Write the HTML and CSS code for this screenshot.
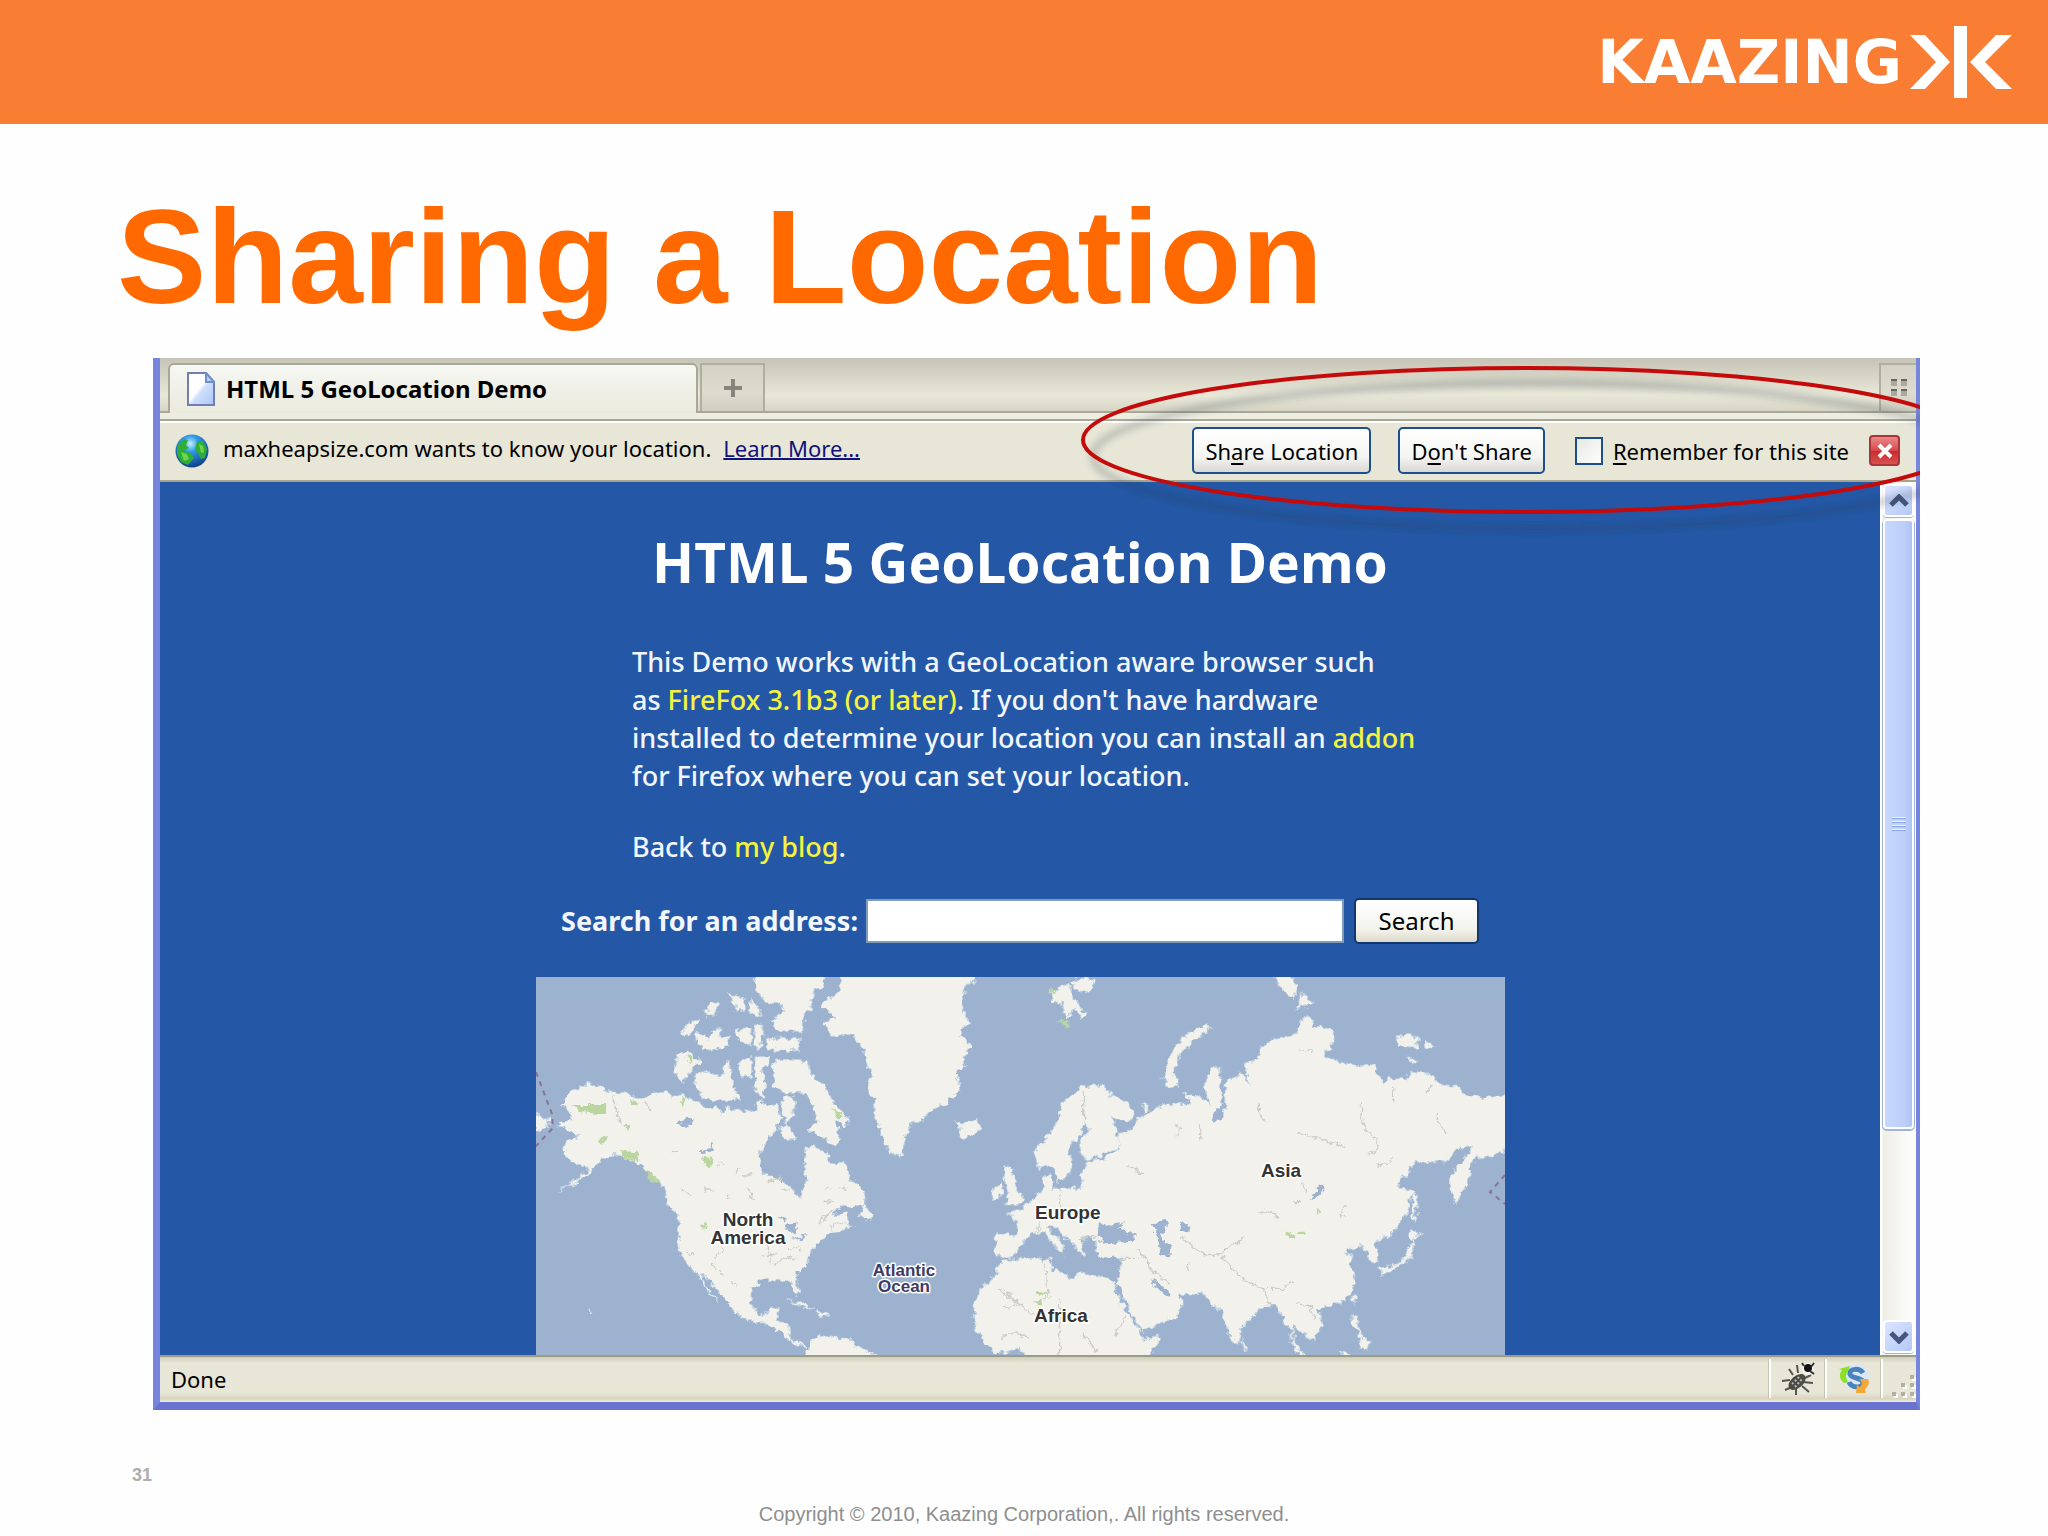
FILE: index.html
```html
<!DOCTYPE html>
<html lang="en">
<head>
<meta charset="utf-8">
<title>Sharing a Location</title>
<link rel="stylesheet" href="styles.css">
</head>
<body>
<header class="banner">
  <div class="brand">
    <span class="brand-name">KAAZING</span>
    <svg class="brand-mark" viewBox="0 0 102 72" aria-hidden="true">
      <path d="M44 0h13v72H44zM0 9h15l25 27-25 27H0l26-27zM102 9H86L60 36l26 27h16L75 36z"/>
    </svg>
  </div>
</header>

<main class="slide">
  <h1 class="slide-title">Sharing a Location</h1>

  <section class="window">
    <div class="tabstrip">
      <div class="tab">
        <svg class="page-icon" viewBox="0 0 28 34" aria-hidden="true">
          <defs><linearGradient id="pg" x1="0" y1="0" x2="1" y2="1"><stop offset=".45" stop-color="#fff"/><stop offset=".55" stop-color="#cfdffb"/><stop offset="1" stop-color="#a9c6fa"/></linearGradient></defs>
          <path d="M1 1h18l8 9v23H1z" fill="url(#pg)" stroke="#6f7fb4" stroke-width="2"/>
          <path d="M19 1v9h8z" fill="#b8d2fb" stroke="#6f8fc8" stroke-width="2"/>
        </svg>
        <span>HTML 5 GeoLocation Demo</span>
      </div>
      <button class="new-tab" type="button" aria-label="New tab">
        <svg viewBox="0 0 18 18" aria-hidden="true"><path d="M9 0v18M0 9h18" stroke="#85857b" stroke-width="4"/></svg>
      </button>
      <button class="tab-list" type="button" aria-label="List tabs">
        <svg viewBox="0 0 18 20" aria-hidden="true"><path d="M1 2h6v6H1zM11 2h6v6h-6zM1 12h6v6H1zM11 12h6v6h-6z" fill="#aaa99f"/><path d="M1 2h6M11 2h6M1 12h6M11 12h6" stroke="#66665f" stroke-width="2"/></svg>
      </button>
    </div>

    <div class="infobar">
      <svg class="globe" viewBox="0 0 34 34" aria-hidden="true">
        <defs><radialGradient id="gl" cx=".45" cy=".28" r=".7"><stop offset="0" stop-color="#c8f0ff"/><stop offset=".35" stop-color="#2f9ae6"/><stop offset="1" stop-color="#12418f"/></radialGradient></defs>
        <circle cx="17" cy="17" r="16.5" fill="url(#gl)"/>
        <path d="M2 12L9 5l4 1-2 5 3 3-6 3 8 2 3 5-6 7-7-3-4-8zM22 7l6 0 4 8-2 9-4 1-3-6-3-3z" fill="#2fae35"/>
        <path d="M6 18l6 2 2 5-5 2zM24 10l4 2 1 6-3 1z" fill="#6fd44f"/>
      </svg>
      <p class="ask">maxheapsize.com wants to know your location.</p>
      <a class="learn" href="#">Learn More...</a>
      <div class="choices">
        <button class="xp-button" type="button">Sh<u>a</u>re Location</button>
        <button class="xp-button" type="button">D<u>o</u>n't Share</button>
        <label class="remember" for="remember"><input id="remember" type="checkbox"><span><u>R</u>emember for this site</span></label>
        <button class="close" type="button" aria-label="Close">
          <svg viewBox="0 0 16 16" aria-hidden="true"><path d="M2 2l12 12M14 2L2 14" stroke="#fff" stroke-width="4"/></svg>
        </button>
      </div>
    </div>

    <div class="viewport">
      <div class="page">
        <h2 class="page-title">HTML 5 GeoLocation Demo</h2>
        <div class="intro">
          <p>This Demo works with a GeoLocation aware browser such<br>as <a href="#">FireFox 3.1b3 (or later)</a>. If you don't have hardware<br>installed to determine your location you can install an <a href="#">addon</a><br>for Firefox where you can set your location.</p>
          <p>Back to <a href="#">my blog</a>.</p>
        </div>
        <form class="search">
          <label for="address">Search for an address:</label>
          <input id="address" type="text">
          <button type="button">Search</button>
        </form>
        <svg class="map" viewBox="0 0 969 378" role="img" aria-label="World map">
          <defs>
            <filter id="coast" x="-5%" y="-5%" width="110%" height="110%">
              <feTurbulence type="fractalNoise" baseFrequency=".16" numOctaves="3" seed="4"/>
              <feDisplacementMap in="SourceGraphic" scale="9" xChannelSelector="R" yChannelSelector="G"/>
            </filter>
          </defs>
          <g filter="url(#coast)">
            <g class="land" transform="translate(-15 -17) scale(.3333)">
              <path d="M960 40H1362L1358 70 1335 75 1330 110 1325 150 1345 190 1318 210 1335 245 1350 258 1325 290 1335 310 1300 345 1320 370 1310 400 1275 430 1225 455 1200 485 1170 490 1155 530 1140 590 1115 585 1090 550 1075 510 1065 480 1058 440 1070 415 1045 405 1045 370 1055 350 1040 320 1030 280 1015 250 995 228 930 225 905 185 945 175 900 140 915 120 955 95Z"/>
              <path d="M1300 480L1315 500 1310 515 1325 535 1355 530 1380 510 1382 490 1365 480 1340 488 1320 485Z"/>
              <path d="M120 435L150 395 175 385 200 370 235 378 265 392 310 398 350 412 380 415 400 400 440 395 450 410 480 405 520 420 545 430 555 450 590 440 600 465 615 440 650 450 700 450 715 420 740 440 765 430 780 480 760 520 735 545 715 580 715 610 725 635 755 650 800 675 825 700 838 722 845 690 855 660 850 620 852 560 880 560 920 580 930 610 950 615 965 600 990 660 1030 690 1032 735 985 740 960 738 930 765 975 760 985 790 1000 795 950 815 915 825 905 840 885 850 865 880 865 905 830 940 825 955 835 1000 825 1005 810 965 790 960 720 962 690 985 690 1030 710 1060 735 1065 750 1045 775 1042 765 1085 800 1090 805 1110 810 1140 850 1150 855 1160 830 1160 800 1140 780 1115 730 1090 690 1085 640 1060 620 1025 590 990 560 955 540 945 560 985 590 1025 570 1010 545 970 530 940 500 915 475 875 470 820 475 765 440 735 435 700 420 670 395 660 370 620 330 600 290 585 260 590 235 605 210 635 170 665 110 695 180 650 205 625 165 610 135 590 130 550 175 525 140 510 110 495 150 480 145 450Z"/>
              <path d="M1012 770L1030 735 1055 765 1050 782ZM925 802L960 790 1000 797 945 818ZM852 1195L870 1140 900 1125 950 1135 985 1135 1000 1155 1085 1195ZM800 1022L840 1026 878 1052 840 1040ZM890 1052L930 1065 895 1074ZM40 460L85 480 80 500 40 512Z"/>
              <path d="M755 310L785 298 860 305 870 340 910 375 940 430 985 475 975 500 945 480 960 545 945 560 900 530 855 510 890 490 870 430 850 400 800 400 760 380ZM785 410L820 410 822 450 800 490 780 460ZM775 500L800 495 825 535 790 540ZM515 350L540 330 600 350 620 300 632 330 635 380 665 415 600 422 545 415 520 370ZM470 280L510 280 540 305 500 345 485 370 460 345ZM650 310L690 290 692 350 660 350ZM705 290L745 290 742 320 720 330 735 370 725 412 702 400ZM735 235L835 235 835 272 740 270ZM525 215L560 235 590 205 600 230 625 230 620 260 560 272 530 250ZM640 210L690 205 690 255 650 240ZM700 195L725 195 720 265 700 260ZM480 220L500 185 540 180 520 210 500 228ZM550 160L575 122 590 130 580 172ZM622 98L665 115 675 150 650 155ZM685 120L710 135 720 170 690 160ZM700 40H918L905 80 875 90 870 150 850 160 845 215 770 210 750 185 790 150 780 135 735 130 705 85Z"/>
              <path d="M1412 690L1445 670 1447 700 1415 718ZM202 1045L218 1055 208 1064Z"/>
            </g>
            <g class="land" transform="translate(465 -17) scale(.3444 .3333)">
              <path d="M10 620L30 625 45 690 72 715 60 730 15 732 25 700 10 660Z"/>
              <path d="M95 570L130 540 160 490 180 430 235 380 295 375 320 405 370 430 388 465 370 485 325 470 335 520 350 530 345 560 300 585 250 600 230 580 230 540 260 510 245 490 225 530 200 560 200 600 205 620 185 655 165 665 155 620 110 625Z"/>
              <path d="M-17 820L50 828 45 780 20 760 60 750 95 715 125 690 120 650 145 645 150 685 235 685 230 640 250 605 310 595 345 560 345 520 375 510 390 485 440 450 500 430 550 430 530 400 585 410 605 440 590 380 610 320 635 325 640 380 640 430 650 460 650 370 700 340 725 380 705 310 750 300 750 265 800 235 860 220 880 170 905 175 910 200 960 210 965 240 940 290 990 305 1040 320 1080 310 1095 340 1110 375 1125 355 1180 360 1185 335 1250 345 1275 375 1330 375 1340 405 1420 415 1480 400V565L1420 590 1375 595 1365 610 1360 660 1320 730 1305 690 1310 640 1345 600 1370 560 1320 565 1295 605 1205 605 1150 675 1205 700 1190 710 1180 760 1140 815 1100 840 1085 855 1095 905 1070 910 1065 875 1040 855 1005 870 1000 880 1025 890 1015 910 1030 970 1000 1020 945 1040 920 1050 935 1100 905 1145 870 1110 850 1100 850 1140 885 1195 870 1195 845 1150 845 1110 820 1090 800 1035 770 1035 720 1080 700 1100 690 1155 665 1130 640 1050 615 1040 595 1005 510 1000 530 1030 510 1070 410 1115 390 1080 335 970 345 950 350 895 280 890 270 855 280 840 235 830 240 890 215 860 170 815 150 800 130 800 185 855 180 885 140 840 125 815 95 820 65 840 55 870 30 893 0 890-17 885Z"/>
              <path d="M145 895L60 895 0 905-19 945-63 990-79 1040-75 1100-48 1150-15 1183 50 1165 75 1195H430L455 1150 467 1130 410 1135 400 1110 375 1070 340 1010 325 960 230 935 210 955 150 930Z"/>
              <path d="M470 355L500 270 540 220 600 190 610 205 560 240 520 280 500 340 515 380 490 380ZM145 100L180 75 200 70 205 110 250 160 235 178 215 145 200 165 185 175 180 130 150 125ZM205 65L240 50 275 60 260 100 215 90ZM785 40H830L858 75 852 118 820 90ZM855 150L875 98 905 130ZM1150 232L1180 222 1215 235 1205 265 1155 262ZM1230 245L1262 262 1235 268ZM1182 290L1208 305 1195 314ZM1102 920L1160 910 1190 850 1182 810 1222 822 1195 840 1195 890 1150 925 1105 950ZM1195 700L1210 710 1202 792 1194 770ZM1018 1005H1032L1025 1032ZM1018 1065L1035 1070 1040 1110 1070 1150 1065 1170 1040 1165 1045 1130 1020 1100ZM695 1140L712 1155 708 1174ZM410 430L430 440 412 460ZM985 1175L1010 1180 990 1195Z"/>
            </g>
            <g class="water" transform="translate(465 -17) scale(.3444 .3333)">
              <path d="M285 785L310 800 360 785 340 802 390 822 385 845 300 850 280 830ZM440 790L480 780 485 795 465 820 492 860 488 892 460 885 455 840ZM525 790L548 790 545 818 525 812ZM438 958L500 1000 480 1012 450 985ZM893 716L935 672 936 690 910 716ZM615 460L650 430 645 470 620 485Z"/>
            </g>
            <g class="water" transform="translate(-15 -17) scale(.3333)">
              <path d="M465 488L500 470 525 480 495 505ZM535 580L580 550 570 575ZM765 765L800 775 790 785ZM790 795L830 790 825 815 800 820ZM810 840L865 820 845 836Z"/>
            </g>
            <g class="park" transform="translate(-15 -17) scale(.3333)">
              <path d="M155 435H255V465L175 455ZM300 570L355 580 350 600 305 590ZM370 625L418 660 410 672 380 650ZM545 590L570 590 575 625 555 620ZM935 445L965 462 950 475ZM495 290H518L508 316ZM235 530L260 535 245 555ZM540 790H556L550 815ZM330 412L350 430 335 440ZM478 415H488V440H478ZM310 495H330L318 512Z"/>
              <path d="M1580 85L1600 90 1605 105 1590 100ZM1612 180H1645L1640 205Z"/>
            </g>
            <g class="park" transform="translate(465 -17) scale(.3444 .3333)">
              <path d="M825 810L855 825 830 835ZM860 815H885V825H860ZM105 990L145 1010 100 1000ZM100 1020H118V1030H100ZM915 745L935 760 918 765Z"/>
            </g>
            <g class="trace" transform="translate(465 -17) scale(.3444 .3333)">
              <path d="M1050 430l-5 40 20 45 30 30-5 30-20 5M1270 460v30l25 35M860 520l60 15 80 25M750 430v30l20 30M515 490v40M580 490v50M1140 380v50M1250 375l-15 25M870 270h35M365 615l45 25M870 670l20 25M1090 615l30-5 20-20M520 830l70 55 50-5 70-50M640 890l60 65 60 30 60 0 25-20M760 990l20 45M860 1030l40 10 10 40M400 870l40 60 50 40M350 895h50M545 900v30M745 760l30-10 30 20M850 725h20M1000 740l-15 30 20 5M125 900l10 90-10 30M0 985l60 50 35 35M0 1135l50-20 30 20M170 1020v160M360 1070l-30 60M0 1040l60-5M235 1120l50 60M240 400v80M110 780v40M170 690v50l60 30M225 840l50-10"/>
            </g>
            <g class="trace" transform="translate(-15 -17) scale(.3333)">
              <path d="M275 410l20 80M375 430l20 20M450 575h20M480 690l30 20M550 690h30M620 700v15M645 640l10-15M665 645h30M680 680l15 40M740 670l40-20M780 690h20M915 690l10-10M955 690l10-10 10 15M890 790l50-45M910 720l30 5M500 870l20 20M570 910l40 40M580 890l30-20M630 960l20 20M720 890l50-10M760 910l60-20M740 850l10 60M800 860l40 10M590 610h20M1430 990l60 40"/>
            </g>
          </g>
          <path class="dateline" d="M0 95l16 42 1 14-17 18M969 198l-15 17 15 12"/>
          <g class="labels">
            <text x="212" y="249" text-anchor="middle">North</text>
            <text x="212" y="267" text-anchor="middle">America</text>
            <text x="499" y="242">Europe</text>
            <text x="725" y="200">Asia</text>
            <text x="498" y="345">Africa</text>
            <text class="sea" x="368" y="299" text-anchor="middle">Atlantic</text>
            <text class="sea" x="368" y="315" text-anchor="middle">Ocean</text>
          </g>
        </svg>
      </div>
      <div class="scrollbar">
        <button type="button" aria-label="Scroll up"><svg viewBox="0 0 20 14" aria-hidden="true"><path d="M2 11l8-8 8 8"/></svg></button>
        <div class="thumb"><span></span><span></span><span></span><span></span></div>
        <div class="track"></div>
        <button type="button" aria-label="Scroll down"><svg viewBox="0 0 20 14" aria-hidden="true"><path d="M2 3l8 8 8-8"/></svg></button>
      </div>
    </div>

    <div class="statusbar">
      <span class="status">Done</span>
      <span class="cell">
        <svg viewBox="0 0 34 34" aria-hidden="true">
          <path d="M12 13L8 7M17 11l-1-8M9 18l-8 1M11 25l-7 3M15 27l0 6M22 20l10 1M21 24l7 6M24 16l6-3" stroke="#55554f" stroke-width="2" fill="none"/>
          <ellipse cx="16" cy="20" rx="10" ry="6" transform="rotate(-40 16 20)" fill="#4a4a47"/>
          <path d="M11 22l8-8M14 25l8-9" stroke="#b9b9b0" stroke-width="2" stroke-dasharray="2 2"/>
          <circle cx="27" cy="7" r="6" fill="#f4f4f0"/><circle cx="27" cy="6" r="4" fill="#111"/><path d="M21 1l2 3M33 1l-3 4M33 12l-4-3" stroke="#333" stroke-width="2"/>
        </svg>
      </span>
      <span class="cell">
        <svg viewBox="0 0 34 34" aria-hidden="true">
          <circle cx="19" cy="15" r="13" fill="#d9e8f6"/>
          <path d="M26 11c-3-5-14-5-13 1 1 5 13 3 13 9s-12 5-14-1" fill="none" stroke="#4a82be" stroke-width="5"/>
          <path d="M13 4l-2 5c-3 4-2 7 0 11l-4 1c-5-4-5-9-2-13L2 7z" fill="#8be028"/>
          <path d="M22 17h9c2 4 0 8-3 10l1 4-10 0 1-8 3 2c2-2 3-5-1-8z" fill="#f4a838"/>
        </svg>
      </span>
      <span class="cell grip">
        <svg viewBox="0 0 24 24" aria-hidden="true"><path d="M20 3h4v4h-4zM11 11h4v4h-4zM20 11h4v4h-4zM2 20h4v4H2zM11 20h4v4h-4zM20 20h4v4h-4z" fill="#fff"/><path d="M18 1h4v4h-4zM9 9h4v4H9zM18 9h4v4h-4zM0 18h4v4H0zM9 18h4v4H9zM18 18h4v4h-4z" fill="#b3b0a0"/></svg>
      </span>
    </div>

    <svg class="callout" viewBox="0 0 846 200" aria-hidden="true">
      <defs><filter id="soft"><feGaussianBlur stdDeviation="3"/></filter></defs>
      <ellipse cx="462" cy="98" rx="443" ry="73" fill="none" stroke="#1c2c40" stroke-opacity=".22" stroke-width="7" filter="url(#soft)"/>
      <ellipse cx="452" cy="82" rx="443" ry="72" fill="none" stroke="#c40a0a" stroke-width="4"/>
    </svg>
  </section>
</main>

<footer class="foot">
  <p class="number">31</p>
  <p class="legal">Copyright © 2010, Kaazing Corporation,. All rights reserved.</p>
</footer>
</body>
</html>
```
FILE: styles.css
```css
* { box-sizing: border-box; }

body {
  margin: 0;
  background: #fefefe;
  font-family: "Liberation Sans", Arial, sans-serif;
}

p, h1, h2 { margin: 0; }
button { padding: 0; font: inherit; color: inherit; }

/* banner */
.banner {
  display: flex;
  justify-content: flex-end;
  height: 124px;
  padding: 26px 36px 0 0;
  background: #f97d33;
}
.brand { display: flex; gap: 8px; align-items: flex-start; color: #fff; }
.brand-name {
  font: bold 60px/72px "DejaVu Sans", Verdana, sans-serif;
}
.brand-mark { width: 102px; height: 72px; fill: #fff; }

/* slide */
.slide { padding: 56px 128px 0 153px; }
.slide-title {
  margin: 0 0 24px -36px;
  font-size: 134px;
  line-height: 154px;
  color: #ff6900;
}

/* browser window */
.window {
  position: relative;
  border: solid #7686de;
  border-width: 0 4px 8px 7px;
  border-bottom-color: #6a74d0;
  font: 22px/28px "Noto Sans", Tahoma, sans-serif;
  color: #000;
  background: #e8e7d7;
}

.tabstrip {
  display: flex;
  align-items: flex-end;
  height: 55px;
  padding-left: 8px;
  border-bottom: 2px solid #a9a896;
  background: linear-gradient(#c6c4b6, #d9d8c9 40%, #e8e7d8 70%, #d6d5c6);
}
.tab {
  display: flex;
  flex: 0 0 530px;
  align-items: center;
  gap: 11px;
  height: 50px;
  margin-bottom: -2px;
  padding-left: 17px;
  border: 2px solid #a9a896;
  border-bottom: 0;
  border-radius: 6px 6px 0 0;
  background: linear-gradient(#f8f8f4, #eeeee6 60%, #ebebdd);
  font-size: 24px;
  font-weight: bold;
}
.page-icon { width: 28px; height: 34px; }
.new-tab, .tab-list {
  display: grid;
  place-items: center;
  height: 48px;
  border: 2px solid #b0af9f;
  border-bottom: 0;
  background: linear-gradient(#d3d2c4, #dddccf 60%, #cfcebf);
}
.new-tab { width: 65px; margin-left: 2px; }
.new-tab svg { width: 18px; height: 18px; }
.tab-list { width: 37px; margin-left: auto; border-right: 0; }
.tab-list svg { width: 18px; height: 20px; }

.infobar {
  display: flex;
  align-items: center;
  height: 69px;
  padding: 8px 16px 0 15px;
  border-bottom: 2px solid #a5a58f;
  background: linear-gradient(#eeede2 6px, #a9a896 6px, #a9a896 8px, #fff 8px, #fff 10px, #e8e7d7 10px);
}
.globe { width: 34px; height: 34px; margin-right: 14px; }
.ask, .learn { padding-bottom: 6px; }
.learn { margin-left: 12px; color: #12127c; text-decoration-thickness: 2px; }
.choices { display: flex; align-items: center; margin-left: auto; }
.xp-button {
  height: 47px;
  margin-right: 27px;
  padding: 0 11px;
  border: 2px solid #1d5088;
  border-radius: 5px;
  background: linear-gradient(#fff, #f4f4f2 65%, #d9d8d4);
}
u { text-underline-offset: 3px; text-decoration-thickness: 2px; }
.remember { display: flex; align-items: center; gap: 10px; margin-left: 3px; }
.remember input {
  width: 28px;
  height: 28px;
  margin: 0;
  appearance: none;
  border: 2px solid #1d5088;
  background: linear-gradient(135deg, #e6e6e2, #fff);
}
.close {
  display: grid;
  place-items: center;
  width: 31px;
  height: 31px;
  margin-left: 20px;
  border: 2px solid #a9343a;
  border-radius: 4px;
  background: linear-gradient(#e88a8a, #d8484a 50%, #cc2a2d 52%, #d85050);
}
.close svg { width: 16px; height: 16px; }

/* web page inside the window */
.viewport { display: flex; background: #2458a6; }
.page {
  flex: 1;
  display: flex;
  flex-direction: column;
  align-items: center;
  padding-top: 45px;
  font-family: "Noto Sans", Corbel, sans-serif;
  color: #f2f6ff;
}
.page-title { font-size: 55px; line-height: 70px; color: #fff; }
.intro {
  width: 776px;
  margin-top: 46px;
  font-size: 27px;
  line-height: 38px;
  font-weight: 500;
  white-space: nowrap;
}
.intro p + p { margin-top: 33px; }
.intro a { color: #f4f43c; text-decoration: none; }
.search { display: flex; align-items: center; height: 46px; margin-top: 32px; }
.search label { font-size: 27px; line-height: 38px; font-weight: bold; }
.search input {
  width: 478px;
  height: 44px;
  margin: 0 10px 0 8px;
  border: 2px solid #7f9db9;
  background: #fff;
}
.search button {
  width: 125px;
  height: 46px;
  border: 2px solid #10386e;
  border-radius: 5px;
  background: linear-gradient(#fff, #f3f3ec 70%, #dcdacb);
  font: 24px/28px "Noto Sans", Tahoma, sans-serif;
  color: #000;
}

.map { display: block; width: 969px; height: 378px; margin-top: 33px; background: #9cb2ce; }
.land { fill: #f2f1ec; stroke: #c3d4e2; stroke-width: 3px; }
.water { fill: #9cb2ce; }
.park { fill: #b9d6a0; }
.trace { fill: none; stroke: #cbcbc8; stroke-width: 4px; }
.dateline { fill: none; stroke: #8a7394; stroke-width: 2px; stroke-dasharray: 5 5; }
.labels {
  font: bold 19px "Liberation Sans", Arial, sans-serif;
  fill: #333;
  stroke: #fff;
  stroke-width: 3px;
  stroke-linejoin: round;
  paint-order: stroke;
}
.labels .sea { font-size: 17px; fill: #3c3c66; }

.scrollbar {
  display: flex;
  flex-direction: column;
  width: 36px;
  padding: 2px 2px 2px 3px;
  background: linear-gradient(90deg, #fff 2px, #eeede6 3px, #f8f8f4 60%, #fefefe);
}
.scrollbar button {
  display: grid;
  place-items: center;
  height: 33px;
  border: 2px solid #fff;
  border-radius: 4px;
  background: linear-gradient(135deg, #dbe5ff, #b4c8f6);
  box-shadow: 0 1px 0 #9fb5dd;
}
.scrollbar button svg { width: 20px; height: 14px; fill: none; stroke: #45577f; stroke-width: 5px; }
.thumb {
  display: flex;
  flex: 611;
  flex-direction: column;
  align-items: center;
  justify-content: center;
  gap: 2px;
  margin-top: 2px;
  border: 2px solid #fff;
  border-radius: 4px;
  background: linear-gradient(90deg, #c8d8fd, #bccefa 70%, #b0c4f4);
  box-shadow: 0 1px 0 1px #9fb5dd;
}
.thumb span { width: 14px; height: 2px; background: #eef4ff; border-bottom: 1px solid #8ca6dc; }
.track { flex: 192; }

.statusbar {
  display: flex;
  height: 47px;
  border-top: 2px solid #9b9b88;
  background: linear-gradient(#cfcebb, #e8e7d8 6px, #e8e6d6 36px, #d8d4c0 42px, #f0efe4);
}
.status { flex: 1; padding: 8px 0 0 11px; }
.cell {
  display: grid;
  place-items: center;
  width: 56px;
  margin: 2px 0 4px;
  border-left: 2px solid #fff;
  box-shadow: -1px 0 0 #c6c4b2;
}
.cell svg { width: 34px; height: 34px; }
.grip { width: 35px; place-items: end; }
.grip svg { width: 24px; height: 24px; }

.callout {
  position: absolute;
  top: 0;
  right: -4px;
  width: 846px;
  height: 200px;
  pointer-events: none;
}

/* footer */
.foot { padding: 54px 132px 0; }
.number { font-size: 18px; line-height: 22px; font-weight: bold; color: #adadad; }
.legal { margin-top: 16px; font-size: 20px; line-height: 24px; text-align: center; color: #8e8e8e; }
```
